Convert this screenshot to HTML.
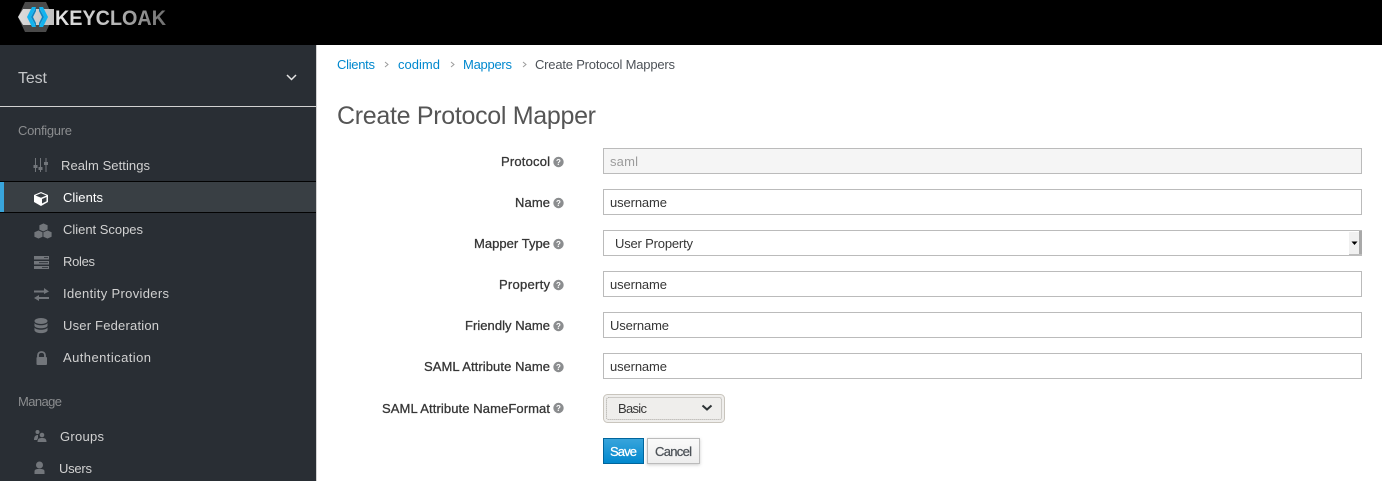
<!DOCTYPE html>
<html><head><meta charset="utf-8"><title>Create Protocol Mapper</title>
<style>
html,body{margin:0;padding:0;background:#fff;width:1382px;height:481px;overflow:hidden}
svg{display:block}
text{font-family:"Liberation Sans",sans-serif;font-size:13px;white-space:pre}
.nav{fill:#d1d1d1}
.sec{fill:#8b8d8f}
.link{fill:#0088ce}
.lab{fill:#363636;stroke:#363636;stroke-width:.3px;font-size:13px}
.val{fill:#363636}
.q{font-size:8px;font-weight:700;text-anchor:middle;fill:#fff}
</style></head><body>
<svg width="1382" height="481" viewBox="0 0 1382 481" xmlns="http://www.w3.org/2000/svg">
<defs>
<linearGradient id="kt" x1="0" x2="1" y1="0" y2="0"><stop offset="0" stop-color="#e4e4e4"/><stop offset=".45" stop-color="#c4c4c4"/><stop offset="1" stop-color="#6f6f6f"/></linearGradient>
<linearGradient id="hx" x1="0" x2="1" y1="0" y2="0"><stop offset="0" stop-color="#dcdcdc"/><stop offset="1" stop-color="#c0c0c0"/></linearGradient>
<linearGradient id="sv" x1="0" x2="0" y1="0" y2="1"><stop offset="0" stop-color="#39a5dc"/><stop offset="1" stop-color="#0088ce"/></linearGradient>
<linearGradient id="cn" x1="0" x2="0" y1="0" y2="1"><stop offset="0" stop-color="#fafafa"/><stop offset="1" stop-color="#ededed"/></linearGradient>
<filter id="sh" x="-20%" y="-20%" width="140%" height="150%"><feDropShadow dx="0" dy="1" stdDeviation="1.5" flood-color="#000" flood-opacity=".2"/></filter>
</defs>
<rect width="1382" height="45" fill="#000"/>
<!-- logo -->
<path d="M25 2H46L53 17 46 32H25L18 17Z" fill="#4a4a4a"/>
<path d="M23 9H54V25H23L18 17Z" fill="url(#hx)"/>
<path d="M27 17 32 7H36L31 17 36 27H32Z" fill="#12b4f0"/>
<path d="M31 17 36 7.500V11L33 17 36 23V26.500Z" fill="#0d87c4"/>
<path d="M48 17 43 7H39L44 17 39 27H43Z" fill="#12b4f0"/>
<path d="M44 17 39 7.500V11L42 17 39 23V26.500Z" fill="#0d87c4"/>
<text x="55" y="25" textLength="111" lengthAdjust="spacingAndGlyphs" style="font-size:21px;font-weight:700" fill="url(#kt)">KEYCLOAK</text>
<!-- sidebar -->
<rect x="0" y="45" width="316" height="436" fill="#292e34"/>
<rect x="316" y="45" width="1" height="436" fill="#d1d1d1"/>
<text x="18" y="83" textLength="29" style="font-size:16px" fill="#c4c6c8">Test</text>
<path d="M287 75 291.500 79.500 296 75" fill="none" stroke="#e4e4e4" stroke-width="1.500"/>
<rect x="0" y="106" width="316" height="1" fill="#d1d1d1"/>
<text class="sec" x="18" y="135" textLength="54">Configure</text>
<g fill="#72767b">
<path d="M35 158H36V172H35ZM40 158H41V172H40ZM45.500 158H46.500V172H45.500Z"/>
<rect x="33.500" y="165" width="4" height="3"/><rect x="38.500" y="167" width="4" height="3"/><rect x="44" y="162" width="4" height="3"/>
</g>
<text class="nav" x="61" y="170" textLength="89">Realm Settings</text>
<rect x="0" y="181" width="316" height="32" fill="#393f44"/>
<rect x="0" y="181" width="316" height="1" fill="#030303"/>
<rect x="0" y="212" width="316" height="1" fill="#030303"/>
<rect x="0" y="182" width="4" height="30" fill="#39a5dc"/>
<path d="M41 192 48 195V202L41 206 34 202V195Z" fill="#fff"/>
<path d="M35.500 195.500 41 193.300 46.500 195.500 41 197.800Z" fill="#393f44"/>
<path d="M42 199 46.500 197V201.200L42 203.500Z" fill="#393f44"/>
<text x="63" y="202" textLength="40" fill="#fff">Clients</text>
<g fill="#72767b" stroke="#292e34" stroke-width=".8">
<path d="M43.500 223 48 225V230L43.500 232 39 230V225Z"/>
<path d="M38.500 230 43 232V237L38.500 239 34 237V232Z"/>
<path d="M47.500 230 52 232V237L47.500 239 43 237V232Z"/>
</g>
<text class="nav" x="63" y="234" textLength="80">Client Scopes</text>
<g fill="#72767b">
<rect x="34" y="256" width="15" height="3.500"/><rect x="34" y="261" width="15" height="3.500"/><rect x="34" y="266" width="15" height="3"/>
</g>
<path d="M44 257.500H48M39 262.700H48M42 267.500H48" stroke="#292e34" stroke-width=".8"/>
<text class="nav" x="63" y="266" textLength="32">Roles</text>
<g fill="#72767b">
<path d="M34 290.500H44V288L49 291.500 44 294V292.500H34Z"/>
<path d="M49 297H39V295L34 298 39 301V299H49Z"/>
</g>
<text class="nav" x="63" y="298" textLength="106">Identity Providers</text>
<g fill="#72767b">
<ellipse cx="41" cy="321" rx="6.500" ry="3"/>
<path d="M34.500 323C36 326 46 326 47.500 323V326C46 329 36 329 34.500 326Z"/>
<path d="M34.500 327.500C36 330.500 46 330.500 47.500 327.500V330.500C46 334 36 334 34.500 330.500Z"/>
</g>
<text class="nav" x="63" y="330" textLength="96">User Federation</text>
<path d="M38 357V355.500C38 350.800 45 350.800 45 355.500V357" fill="none" stroke="#72767b" stroke-width="1.800"/>
<rect x="36.500" y="357" width="10.500" height="8" rx="1" fill="#72767b"/>
<text class="nav" x="63" y="362" textLength="88">Authentication</text>
<text class="sec" x="18" y="406" textLength="44">Manage</text>
<g fill="#72767b">
<circle cx="37.500" cy="432" r="2"/><path d="M34 440C34 436 36 435 38 435L38 438 37 440Z"/>
<circle cx="42" cy="435" r="2.300"/><path d="M37.500 442C37.500 438 40 438 42 438S46.500 438 46.500 442Z"/>
</g>
<text class="nav" x="60" y="441" textLength="44">Groups</text>
<g fill="#72767b">
<circle cx="39.500" cy="465" r="3.500"/><path d="M34.500 474V471.500C34.500 469 37 469 39.500 469S44.500 469 44.500 471.500V474Z"/>
</g>
<text class="nav" x="59" y="473" textLength="33">Users</text>
<!-- breadcrumb -->
<text class="link" x="337" y="69" textLength="38">Clients</text>
<path d="M385 62 388 64.500 385 67M451 62 454 64.500 451 67M523 62 526 64.500 523 67" fill="none" stroke="#9c9c9c"/>
<text class="link" x="398" y="69" textLength="42">codimd</text>
<text class="link" x="463" y="69" textLength="49">Mappers</text>
<text x="535" y="69" textLength="140" fill="#4d5258">Create Protocol Mappers</text>
<text x="337" y="124" textLength="259" style="font-size:25px" fill="#555">Create Protocol Mapper</text>
<!-- labels -->
<text class="lab" x="501" y="166" textLength="49">Protocol</text>
<text class="lab" x="515" y="207" textLength="35">Name</text>
<text class="lab" x="474" y="248" textLength="76">Mapper Type</text>
<text class="lab" x="499" y="289" textLength="51">Property</text>
<text class="lab" x="465" y="330" textLength="85">Friendly Name</text>
<text class="lab" x="424" y="371" textLength="126">SAML Attribute Name</text>
<text class="lab" x="382" y="413" textLength="168">SAML Attribute NameFormat</text>
<g fill="#8b8d8f">
<circle cx="558.500" cy="162" r="5.200"/><circle cx="558.500" cy="203" r="5.200"/><circle cx="558.500" cy="244" r="5.200"/><circle cx="558.500" cy="285" r="5.200"/><circle cx="558.500" cy="326" r="5.200"/><circle cx="558.500" cy="367" r="5.200"/><circle cx="558.500" cy="408" r="5.200"/>
</g>
<text class="q" x="558.500" y="165">?</text>
<text class="q" x="558.500" y="206">?</text>
<text class="q" x="558.500" y="247">?</text>
<text class="q" x="558.500" y="288">?</text>
<text class="q" x="558.500" y="329">?</text>
<text class="q" x="558.500" y="370">?</text>
<text class="q" x="558.500" y="411">?</text>
<!-- inputs -->
<g stroke="#bbb" fill="#fff">
<rect x="603.500" y="148.500" width="758" height="25" fill="#f5f5f5"/>
<rect x="603.500" y="189.500" width="758" height="25"/>
<rect x="603.500" y="271.500" width="758" height="25"/>
<rect x="603.500" y="312.500" width="758" height="25"/>
<rect x="603.500" y="353.500" width="758" height="25"/>
<rect x="603.500" y="230.500" width="758" height="25"/>
</g>
<text x="610" y="166" textLength="28" fill="#9c9c9c">saml</text>
<text class="val" x="610" y="207" textLength="57">username</text>
<text class="val" x="615" y="248" textLength="78">User Property</text>
<text class="val" x="610" y="289" textLength="57">username</text>
<text class="val" x="610" y="330" textLength="59">Username</text>
<text class="val" x="610" y="371" textLength="57">username</text>
<!-- native select button -->
<rect x="1349" y="232" width="10" height="23" fill="#f0f0f0"/>
<rect x="1359" y="231" width="3" height="25" fill="#a9a9a9"/>
<rect x="1349" y="254" width="13" height="2" fill="#bdbdbd"/>
<path d="M1351.500 241.500H1357.500L1354.500 245Z" fill="#000"/>
<!-- Basic select -->
<rect x="603.500" y="394.500" width="121" height="28" rx="4" fill="#efeeec" stroke="#c9c5bd"/>
<rect x="606.500" y="397.500" width="115" height="22" rx="2" fill="none" stroke="#a8a6a1" stroke-dasharray="1 1"/>
<text class="val" x="618" y="413" textLength="29">Basic</text>
<path d="M702.500 405.500 707 409.500 711.500 405.500" fill="none" stroke="#2e3436" stroke-width="2"/>
<!-- buttons -->
<rect x="603.500" y="438.500" width="40" height="25" fill="url(#sv)" stroke="#00659c"/>
<text x="610" y="456" textLength="27" style="font-size:13px;stroke:#fff;stroke-width:.25px" fill="#fff">Save</text>
<rect x="647.500" y="438.500" width="52" height="25" fill="url(#cn)" stroke="#bbb" filter="url(#sh)"/>
<text x="655" y="456" textLength="37" style="font-size:13px;stroke:#4d5258;stroke-width:.25px" fill="#4d5258">Cancel</text>
</svg>
</body></html>
